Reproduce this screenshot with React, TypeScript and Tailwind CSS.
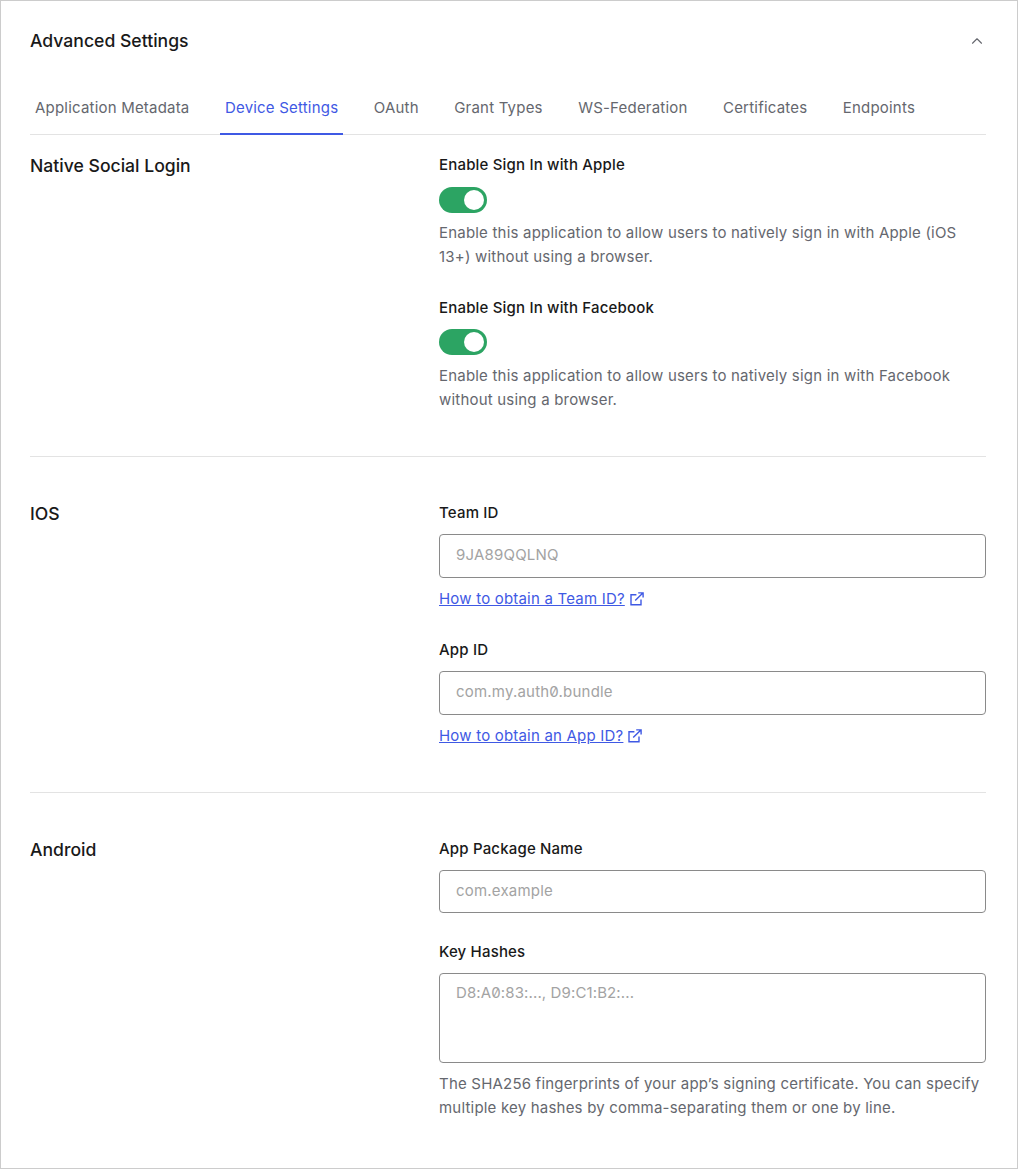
import { ChevronUp } from "lucide-react";

const tabs = [
  { label: "Application Metadata", active: false },
  { label: "Device Settings", active: true },
  { label: "OAuth", active: false },
  { label: "Grant Types", active: false },
  { label: "WS-Federation", active: false },
  { label: "Certificates", active: false },
  { label: "Endpoints", active: false },
];

function Toggle({ className }: { className: string }) {
  return (
    <div className={`${className} flex h-[26px] w-12 items-center justify-end rounded-full bg-[#2ca463] pr-[3px]`}>
      <div className="h-5 w-5 rounded-full bg-white" />
    </div>
  );
}

function ExternalIcon() {
  return (
    <svg width="14" height="14" viewBox="0 0 14 14" fill="none" stroke="currentColor" strokeWidth="1.4" className="ml-[5px] inline-block">
      <path d="M6.4 2.8H1v10h10V7.6" />
      <path d="M5.2 8.6 12.6 1.2M8.2.9h4.9v4.7" />
    </svg>
  );
}

function Label({ children }: { children: string }) {
  return <div className="text-[15px] leading-6 font-medium tracking-[0.18px] text-[#191919]">{children}</div>;
}

function Help({ children }: { children: string }) {
  return <p className="text-[15px] leading-6 tracking-[0.2px] text-[#65676e]">{children}</p>;
}

function Field({ placeholder, height = "h-11" }: { placeholder: string; height?: string }) {
  return (
    <input
      readOnly
      placeholder={placeholder}
      className={`mt-[9px] block ${height} w-full rounded-[4px] border border-[#8a8a8a] bg-white px-4 pb-[3px] text-[15px] tracking-[0.2px] slashed-zero outline-none placeholder:text-[#a3a3a3]`}
    />
  );
}

function HelpLink({ children }: { children: string }) {
  return (
    <div className="mt-[9px] flex items-center text-[15px] leading-6 tracking-[0.2px] text-[#3f59e4]">
      <a href="#" className="underline">{children}</a>
      <ExternalIcon />
    </div>
  );
}

export default function App() {
  return (
    <div className="h-[1169px] w-[1018px] border border-[#cccccc] bg-white pr-[31px] pl-[29px] font-['Inter',sans-serif]">
      <div className="flex h-[82px] items-center justify-between pb-[2px]">
        <h2 className="text-[17.6px] font-medium text-[#191919]">Advanced Settings</h2>
        <ChevronUp className="h-[18px] w-[18px] text-[#65676e]" strokeWidth={1.5} />
      </div>

      <nav className="flex gap-[25.5px] border-b border-[#e3e3e3]">
        {tabs.map((tab) => (
          <div
            key={tab.label}
            className={`-mb-px border-b-2 px-[5px] py-[13px] text-[15px] leading-[24px] tracking-[0.2px] ${
              tab.active ? "border-[#3f59e4] text-[#3f59e4]" : "border-transparent text-[#65676e]"
            }`}
          >
            {tab.label}
          </div>
        ))}
      </nav>

      <section className="flex border-b border-[#e3e3e3] pt-[18px] pb-[44px]">
        <h3 className="w-[409px] text-[17.6px] leading-[26px] font-medium text-[#191919]">Native Social Login</h3>
        <div className="flex-1">
          <Label>Enable Sign In with Apple</Label>
          <Toggle className="mt-[10px]" />
          <div className="mt-2">
            <Help>Enable this application to allow users to natively sign in with Apple (iOS 13+) without using a browser.</Help>
          </div>
          <div className="mt-[27px]">
            <Label>Enable Sign In with Facebook</Label>
          </div>
          <Toggle className="mt-[9px]" />
          <div className="mt-[9px]">
            <Help>Enable this application to allow users to natively sign in with Facebook without using a browser.</Help>
          </div>
        </div>
      </section>

      <section className="flex border-b border-[#e3e3e3] pt-[44px] pb-[44px]">
        <h3 className="w-[409px] text-[17.6px] leading-[26px] font-medium text-[#191919]">IOS</h3>
        <div className="flex-1">
          <Label>Team ID</Label>
          <Field placeholder="9JA89QQLNQ" />
          <HelpLink>How to obtain a Team ID?</HelpLink>
          <div className="mt-[27px]">
            <Label>App ID</Label>
          </div>
          <Field placeholder="com.my.auth0.bundle" />
          <HelpLink>How to obtain an App ID?</HelpLink>
        </div>
      </section>

      <section className="flex pt-[44px]">
        <h3 className="w-[409px] text-[17.6px] leading-[26px] font-medium text-[#191919]">Android</h3>
        <div className="flex-1">
          <Label>App Package Name</Label>
          <Field placeholder="com.example" height="h-[43px]" />
          <div className="mt-[27px]">
            <Label>Key Hashes</Label>
          </div>
          <textarea
            readOnly
            placeholder="D8:A0:83:..., D9:C1:B2:..."
            className="mt-[9px] block h-[90px] w-full resize-none rounded-[4px] border border-[#8a8a8a] bg-white px-4 py-[7px] text-[15px] leading-6 tracking-[0.12px] slashed-zero outline-none placeholder:text-[#a3a3a3]"
          />
          <div className="mt-[9px]">
            <Help>The SHA256 fingerprints of your app’s signing certificate. You can specify multiple key hashes by comma-separating them or one by line.</Help>
          </div>
        </div>
      </section>
    </div>
  );
}
